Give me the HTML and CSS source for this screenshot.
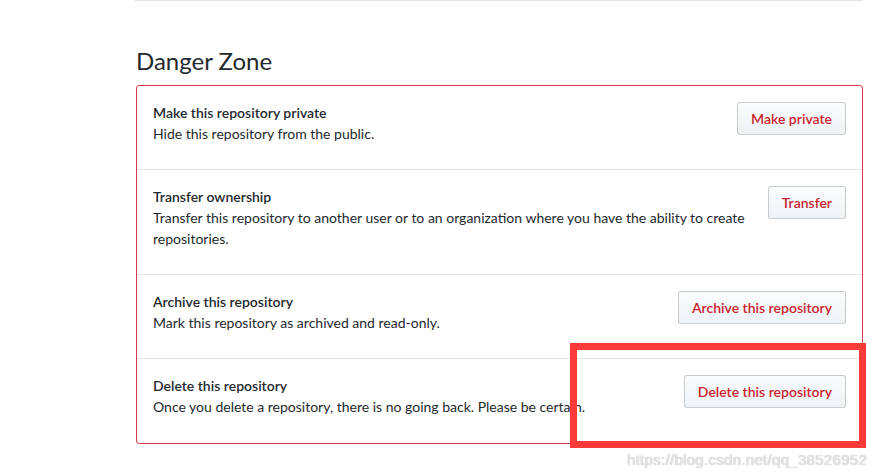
FILE: index.html
```html
<!DOCTYPE html>
<html>
<head>
	<meta name="viewport" content="width=device-width, initial-scale=1.0">
	<link rel="stylesheet" href="styles.css">
</head>
<body>
	<div class="page">
		<div class="top-rule"></div>

		<h2 class="subhead">Danger Zone</h2>

		<div class="danger-box">
			<div class="danger-row">
				<button class="btn-danger" type="button">Make private</button>
				<strong class="row-title">Make this repository private</strong>
				<p class="row-desc">Hide this repository from the public.</p>
			</div>
			<div class="danger-row">
				<button class="btn-danger" type="button">Transfer</button>
				<strong class="row-title">Transfer ownership</strong>
				<p class="row-desc">Transfer this repository to another user or to an organization where you have the ability to create repositories.</p>
			</div>
			<div class="danger-row">
				<button class="btn-danger" type="button">Archive this repository</button>
				<strong class="row-title">Archive this repository</strong>
				<p class="row-desc">Mark this repository as archived and read-only.</p>
			</div>
			<div class="danger-row">
				<button class="btn-danger" type="button">Delete this repository</button>
				<strong class="row-title">Delete this repository</strong>
				<p class="row-desc">Once you delete a repository, there is no going back. Please be certain.</p>
			</div>
		</div>
	</div>

	<!-- screenshot annotation + watermark -->
	<div class="highlight"></div>
	<div class="watermark">https://blog.csdn.net/qq_38526952</div>
</body>
</html>
```

FILE: styles.css
```css
:root {
	--text: #24292e;
	--danger: #cb2431;
	--danger-border: #d73a49;
	--rule: #e1e4e8;
}

body {
	margin: 0;
	background: #fff;
	color: var(--text);
	font-family: Lato, "Noto Sans", sans-serif;
	font-size: 14px;
	line-height: 21px;
}

.page {
	width: 727px;
	margin-left: 136px;
}

.top-rule {
	height: 1px;
	background: var(--rule);
	margin-left: -1px;
}

.subhead {
	margin: 45px 0 9px;
	font-size: 24px;
	font-weight: normal;
	line-height: 30px;
}

.danger-box {
	border: 1px solid var(--danger-border);
	border-radius: 3px;
}

.danger-row {
	padding: 16px 16px 9px;
	border-top: 1px solid var(--rule);
}

.danger-row:first-child { border-top: none; }
.danger-row:last-child { padding-bottom: 10px; }

.row-title {
	display: block;
	font-weight: 600;
}

.row-desc {
	margin: 0 0 16px;
}

.btn-danger {
	float: right;
	margin-left: 16px;
	padding: 6px 13px;
	background: linear-gradient(#fafbfc, #eff3f6);
	border: 1px solid rgba(27, 31, 35, .2);
	border-radius: 3px;
	color: var(--danger);
	font-family: inherit;
	font-size: 14px;
	font-weight: 600;
	line-height: 19px;
	cursor: pointer;
}

.highlight {
	position: absolute;
	left: 570px;
	top: 343px;
	width: 282px;
	height: 91px;
	border: 7px solid #fc3a3a;
}

.watermark {
	position: absolute;
	left: 627px;
	top: 450px;
	color: #e6e6e6;
	font-family: "Liberation Sans", sans-serif;
	font-size: 15px;
	line-height: 20px;
	letter-spacing: 0.3px;
	text-shadow: 0 0 1px #aaa;
}
```
